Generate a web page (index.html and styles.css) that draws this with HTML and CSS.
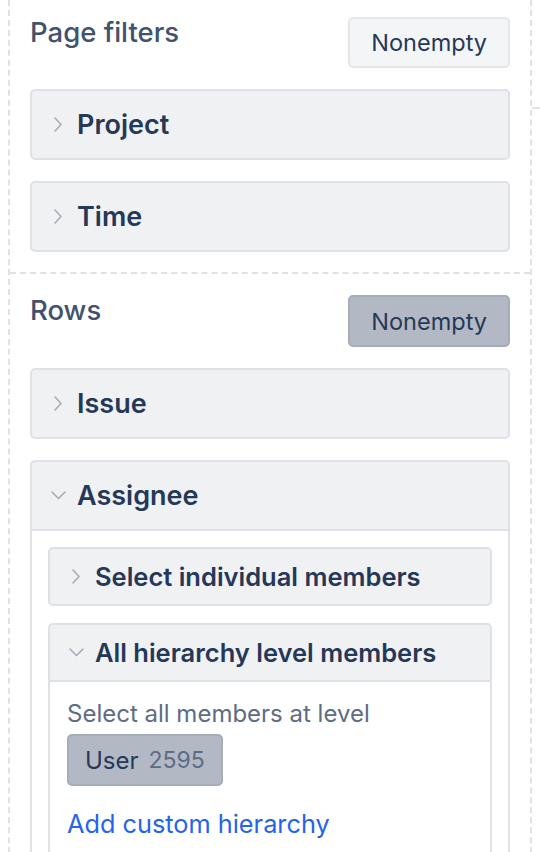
FILE: index.html
```html
<!DOCTYPE html>
<html>
<head>
<meta charset="utf-8">
<link rel="stylesheet" href="styles.css">
</head>
<body>
<div class="panel">
  <section class="section">
    <div class="section-head">
      <h2 class="title">Page filters</h2>
      <button class="btn">Nonempty</button>
    </div>
    <div class="acc">
      <div class="acc-head"><span class="ico"><svg width="8" height="15" viewBox="0 0 8 15"><polyline points="1,1 7,7.5 1,14" fill="none" stroke="#a5adba" stroke-width="1.6" stroke-linecap="round" stroke-linejoin="round"/></svg></span>Project</div>
    </div>
    <div class="acc">
      <div class="acc-head"><span class="ico"><svg width="8" height="15" viewBox="0 0 8 15"><polyline points="1,1 7,7.5 1,14" fill="none" stroke="#a5adba" stroke-width="1.6" stroke-linecap="round" stroke-linejoin="round"/></svg></span>Time</div>
    </div>
  </section>
  <section class="section">
    <div class="section-head">
      <h2 class="title">Rows</h2>
      <button class="btn active">Nonempty</button>
    </div>
    <div class="acc">
      <div class="acc-head"><span class="ico"><svg width="8" height="15" viewBox="0 0 8 15"><polyline points="1,1 7,7.5 1,14" fill="none" stroke="#a5adba" stroke-width="1.6" stroke-linecap="round" stroke-linejoin="round"/></svg></span>Issue</div>
    </div>
    <div class="acc open">
      <div class="acc-head"><span class="ico"><svg width="15" height="9" viewBox="0 0 15 9"><polyline points="1,1 7.5,7.5 14,1" fill="none" stroke="#a5adba" stroke-width="1.6" stroke-linecap="round" stroke-linejoin="round"/></svg></span>Assignee</div>
      <div class="acc-body">
        <div class="acc sub">
          <div class="acc-head"><span class="ico"><svg width="8" height="15" viewBox="0 0 8 15"><polyline points="1,1 7,7.5 1,14" fill="none" stroke="#a5adba" stroke-width="1.6" stroke-linecap="round" stroke-linejoin="round"/></svg></span>Select individual members</div>
        </div>
        <div class="acc sub open">
          <div class="acc-head"><span class="ico"><svg width="15" height="9" viewBox="0 0 15 9"><polyline points="1,1 7.5,7.5 14,1" fill="none" stroke="#a5adba" stroke-width="1.6" stroke-linecap="round" stroke-linejoin="round"/></svg></span>All hierarchy level members</div>
          <div class="sub-body">
            <p class="hint">Select all members at level</p>
            <span class="chip">User<span class="count">2595</span></span>
            <a class="link" href="#">Add custom hierarchy</a>
          </div>
        </div>
      </div>
    </div>
  </section>
</div>
<div class="neighbor"></div>
</body>
</html>
```
FILE: styles.css
```css
html, body {
  margin: 0;
  background: #ffffff;
}
body {
  font-family: Inter, "Noto Sans", sans-serif;
  display: flex;
  align-items: flex-start;
  height: 852px;
  overflow: hidden;
}
.panel {
  flex: none;
  margin-left: 8px;
  width: 520px;
  min-height: 900px;
  border-left: 2px dashed #dfe1e6;
  border-right: 2px dashed #dfe1e6;
}
.neighbor {
  flex: 1;
  margin-top: 107px;
  border-top: 2px dashed #dfe1e6;
}
.section {
  padding: 17px 20px 20px;
}
.section + .section {
  border-top: 2px dashed #dfe1e6;
  padding-top: 21px;
}
.section-head {
  display: flex;
  justify-content: space-between;
  align-items: flex-start;
  margin-bottom: 21px;
}
.title {
  margin: 0;
  font-size: 27.5px;
  line-height: 30px;
  font-weight: 500;
  color: #42526e;
}
.btn {
  font-family: inherit;
  font-size: 23.5px;
  color: #253858;
  background: #f4f5f7;
  border: 2px solid #e4e6ea;
  border-radius: 5px;
  height: 51px;
  padding: 0 21px;
  margin: 0;
}
.btn.active {
  background: #b3b9c4;
  border-color: #a5adba;
  height: 52px;
}
.acc {
  border: 2px solid #dfe1e6;
  border-radius: 5px;
  background: #f0f1f3;
  overflow: hidden;
}
.acc + .acc {
  margin-top: 21px;
}
.acc-head {
  height: 67px;
  display: flex;
  align-items: center;
  gap: 11px;
  padding-left: 18px;
  font-size: 27px;
  font-weight: 600;
  color: #253858;
}
.ico {
  width: 16px;
  display: flex;
  justify-content: center;
  align-items: center;
}
.acc.open > .acc-head {
  border-bottom: 2px solid #dfe1e6;
}
.acc-body {
  background: #ffffff;
  padding: 16px 16px 20px;
}
.acc.sub {
  border-radius: 5px;
}
.acc.sub + .acc.sub {
  margin-top: 17px;
}
.acc.sub > .acc-head {
  height: 55px;
  font-size: 25.5px;
}
.sub-body {
  background: #ffffff;
  padding: 17px 17px 30px;
}
.hint {
  margin: 0;
  font-size: 24px;
  line-height: 29px;
  color: #5e6c84;
}
.chip {
  display: inline-flex;
  align-items: center;
  gap: 10px;
  margin-top: 6px;
  height: 48px;
  padding: 0 16px 0 16px;
  background: #b3b9c4;
  border: 2px solid #a5adba;
  border-radius: 5px;
  font-size: 24px;
  color: #253858;
}
.count {
  font-size: 23px;
  color: #5e6c84;
}
.link {
  display: block;
  margin-top: 22px;
  font-size: 25.3px;
  line-height: 31px;
  color: #2563eb;
  text-decoration: none;
}
```
